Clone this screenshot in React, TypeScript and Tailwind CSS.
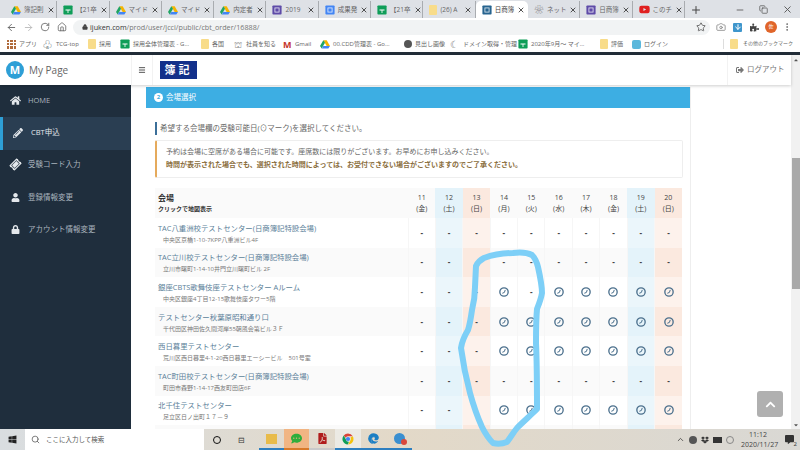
import React from 'react';
import { ArrowLeft, ArrowRight, ArrowDown, RotateCw, Home, Lock, Star, Camera, MoreVertical, Plus, Minus, X, Copy, Search, ChevronUp, Menu } from 'lucide-react';
import { FaHome, FaPencilAlt, FaTicketAlt, FaUser, FaLock, FaSignOutAlt, FaPuzzlePiece, FaChevronUp, FaCaretUp, FaCaretDown, FaWindows, FaFilePdf, FaEdge, FaCommentDots, FaYoutube, FaDropbox, FaCommentAlt } from 'react-icons/fa';

const FONT = "font-['Open_Sans','Noto_Sans_CJK_JP',sans-serif]";

function Drive({ s = 10 }: { s?: number }) {
  return (
    <svg width={s} height={s} viewBox="0 0 24 24" className="shrink-0">
      <path d="M8 3h8l8 14h-8z" fill="#f4b400" />
      <path d="M8 3 0 17l4 6 8-14z" fill="#1fa463" />
      <path d="M4 23h16l4-6H8z" fill="#4285f4" />
    </svg>
  );
}

function Sheet({ s = 10 }: { s?: number }) {
  return (
    <svg width={s} height={s} viewBox="0 0 24 24" className="shrink-0">
      <rect x="1" y="1" width="22" height="22" rx="2" fill="#0f9d58" />
      <path d="M6 11h12v2H13v6h-2v-6H6z" fill="#fff" />
    </svg>
  );
}

function Doc({ color, s = 10 }: { color: string; s?: number }) {
  return (
    <svg width={s} height={s} viewBox="0 0 24 24" className="shrink-0">
      <rect x="1" y="1" width="22" height="22" rx="2" fill={color} />
      <rect x="6" y="6" width="12" height="12" fill="#fff" opacity="0.85" />
      <rect x="8" y="8" width="8" height="8" fill={color} />
    </svg>
  );
}

function Folder() {
  return <div className="h-[10px] w-[8px] shrink-0 rounded-[1px] bg-[#f8dc8a]" />;
}

function ClockMark() {
  return (
    <svg width="10" height="10" viewBox="0 0 24 24" fill="none" stroke="#4a6f8c" className="mx-auto">
      <circle cx="12" cy="12" r="10" strokeWidth="3.2" />
      <path d="M8 15l5-2 2-6" strokeWidth="2.4" />
    </svg>
  );
}

function ChromeLogo() {
  return (
    <svg width="12" height="12" viewBox="0 0 24 24">
      <path d="M12 1a11 11 0 0 1 9.5 5.5H12a5.5 5.5 0 0 0-5 3.2L3.5 5A11 11 0 0 1 12 1z" fill="#db4437" />
      <path d="M21.5 6.500A11 11 0 0 1 12 23l4.700-8.200A5.500 5.500 0 0 0 16.800 9z" fill="#f4c20d" />
      <path d="M3.500 5 7.800 13A5.500 5.500 0 0 0 14 17.300L11.500 23A11 11 0 0 1 3.500 5z" fill="#0f9d58" />
      <circle cx="12" cy="12" r="4.200" fill="#4285f4" />
    </svg>
  );
}

const tabs = [
  { icon: <Drive />, text: '簿記則' },
  { icon: <Sheet />, text: '【21卒' },
  { icon: <Drive />, text: 'マイド' },
  { icon: <Drive />, text: 'マイド' },
  { icon: <Drive />, text: '内定者' },
  { icon: <Doc color="#5e4ba8" />, text: '2019' },
  { icon: <Doc color="#4285f4" />, text: '成果発' },
  { icon: <Sheet />, text: '【21卒' },
  { icon: <Folder />, text: '(26) A' },
  { icon: <Doc color="#27648f" />, text: '日商簿', active: true },
  { icon: <span className="w-[10px] shrink-0 text-center text-[9px] leading-none text-[#777]">❀</span>, text: 'ネット' },
  { icon: <Doc color="#5e4ba8" />, text: '日商簿' },
  { icon: <FaYoutube size={11} color="#e02020" className="shrink-0" />, text: 'このチ' },
];

const bookmarks = [
  { w: 'w-[36px]', icon: <span className="grid h-[9px] w-[9px] shrink-0 grid-cols-3 gap-px">{Array.from({ length: 9 }).map((_, i) => <span key={i} className="bg-[#b06a3a]" />)}</span>, text: 'アプリ' },
  { w: 'w-[45px]', icon: <span className="w-[10px] shrink-0 text-[9px] leading-none text-[#5a6a70]">♧</span>, text: 'TCG-top' },
  { w: 'w-[32px]', icon: <Folder />, text: '採用' },
  { w: 'w-[81px]', icon: <Sheet />, text: '採用全体管理表 - G...' },
  { w: 'w-[33px]', icon: <Folder />, text: '各国' },
  { w: 'w-[49px]', icon: <span className="w-[9px] shrink-0 text-[9px] leading-none text-[#888]">⛫</span>, text: '社員を知る' },
  { w: 'w-[37px]', icon: <span className="w-[9px] shrink-0 text-[9px] font-bold leading-none text-[#c5352b]">M</span>, text: 'Gmail' },
  { w: 'w-[84px]', icon: <Drive />, text: '00.CDD管理表 - Go...' },
  { w: 'w-[46px]', icon: <span className="h-[8px] w-[8px] shrink-0 rounded-full bg-[#555]" />, text: '見出し画像' },
  { w: 'w-[68px]', icon: <span className="w-[10px] shrink-0 text-[10px] leading-none text-[#666]">☾</span>, text: 'ドメイン取得・管理' },
  { w: 'w-[82px]', icon: <Sheet />, text: '2020年9月～ マイ...' },
  { w: 'w-[32px]', icon: <Folder />, text: '評価' },
  { w: 'w-[36px]', icon: <span className="h-[9px] w-[9px] shrink-0 rounded-[2px] bg-[#5cb8dc]" />, text: 'ログイン' },
];

const nav = [
  { icon: <FaHome size={11} />, text: 'HOME' },
  { icon: <FaPencilAlt size={10} />, text: 'CBT申込', active: true },
  { icon: <FaTicketAlt size={11} className="-rotate-45" />, text: '受験コード入力' },
  { icon: <FaUser size={9} />, text: '登録情報変更' },
  { icon: <FaLock size={9} />, text: 'アカウント情報変更' },
];

const days = [
  { d: '11', w: '金' }, { d: '12', w: '土' }, { d: '13', w: '日' }, { d: '14', w: '月' }, { d: '15', w: '火' },
  { d: '16', w: '水' }, { d: '17', w: '木' }, { d: '18', w: '金' }, { d: '19', w: '土' }, { d: '20', w: '日' },
];

const venues = [
  { name: 'TAC八重洲校テストセンター(日商簿記特設会場)', addr: '中央区京橋1-10-7KPP八重洲ビル4F', slots: '' },
  { name: 'TAC立川校テストセンター(日商簿記特設会場)', addr: '立川市曙町1-14-10井門立川曙町ビル 2F', slots: '' },
  { name: '銀座CBTS歌舞伎座テストセンター Aルーム', addr: '中央区銀座4丁目12-15歌舞伎座タワー5階', slots: '0001011111' },
  { name: 'テストセンター秋葉原昭和通り口', addr: '千代田区神田佐久間河岸55朝風会第ビル３Ｆ', slots: '0001111111' },
  { name: '西日暮里テストセンター', addr: '荒川区西日暮里4-1-20西日暮里エーシービル　501号室', slots: '0001111111' },
  { name: 'TAC町田校テストセンター(日商簿記特設会場)', addr: '町田市森野1-14-17西友町田店6F', slots: '' },
  { name: '北千住テストセンター', addr: '足立区日ノ出町１７－９', slots: '0001111111' },
];

function cellBg(i: number, row: number) {
  if (i === 1 || i === 8) return row % 2 ? 'bg-[#e4f3fa]' : 'bg-[#ebf6fb]';
  if (i === 2 || i === 9) return row % 2 ? 'bg-[#fbe9df]' : 'bg-[#fdf2ec]';
  return row % 2 ? 'bg-[#fafafa]' : 'bg-white';
}

export default function App() {
  return (
    <div className={`relative flex h-[450px] w-[800px] flex-col overflow-hidden bg-white ${FONT}`}>
      {/* tabs */}
      <div className="flex h-[18px] shrink-0 items-end bg-[#dee1e6] pl-[5px]">
        {tabs.map((t, i) => (
          <div
            key={i}
            className={`flex h-[17px] w-[52.3px] shrink-0 items-center gap-[3px] pl-[6px] pr-[3px] text-[6.5px] ${t.active ? 'rounded-t-[5px] bg-white text-[#444]' : 'border-r border-[#a9acb0] text-[#666]'}`}
          >
            {t.icon}
            <span className="flex-1 whitespace-nowrap">{t.text}</span>
            <X size={8} strokeWidth={2.5} className="shrink-0 text-[#333]" />
          </div>
        ))}
        <Plus size={12} strokeWidth={2} className="mb-[2px] ml-[5px] text-[#444]" />
        <div className="ml-auto flex h-[17px] items-center gap-[14px] pr-[7px] text-[#555]">
          <Minus size={10} />
          <Copy size={9} />
          <X size={11} />
        </div>
      </div>

      {/* address bar */}
      <div className="flex h-[18px] shrink-0 items-center bg-white pl-[6px] text-[#666]">
        <ArrowLeft size={11} />
        <ArrowRight size={11} className="ml-[6px] text-[#bbb]" />
        <RotateCw size={10} className="ml-[6px]" />
        <Home size={10} className="ml-[7px]" />
        <div className="ml-[6px] flex h-[15px] w-[637px] items-center rounded-full bg-[#f1f3f4] pl-[9px] text-[7.2px]">
          <Lock size={6} className="text-[#444]" fill="#444" />
          <span className="ml-[2px] text-[#333]">ijuken.com</span>
          <span className="text-[#777]">/prod/user/jcci/public/cbt_order/16888/</span>
          <Star size={10} className="ml-auto mr-[4px] text-[#555]" />
        </div>
        <Camera size={10} className="ml-[6px] text-[#888]" />
        <div className="ml-[7px] flex h-[9px] w-[9px] items-center justify-center rounded-[1px] bg-[#3f96cc] text-white">
          <ArrowDown size={8} strokeWidth={3} />
        </div>
        <FaPuzzlePiece size={9} className="ml-[8px] text-[#444]" />
        <div className="ml-[6px] flex h-[12px] w-[12px] items-center justify-center rounded-full bg-[#e0652a] text-[5px] text-white">佐</div>
        <MoreVertical size={10} className="ml-[5px]" />
      </div>

      {/* bookmarks */}
      <div className="flex h-[16px] shrink-0 items-center bg-white pl-[7px] text-[6px] text-[#666]">
        {bookmarks.map((b, i) => (
          <div key={i} className={`flex ${b.w} shrink-0 items-center gap-[3px] whitespace-nowrap`}>
            {b.icon}
            <span>{b.text}</span>
          </div>
        ))}
        <div className="ml-auto flex h-[10px] items-center gap-[5px] border-l border-[#ddd] pl-[6px] pr-[7px] text-[5px]">
          <Folder />
          <span>その他のブックマーク</span>
        </div>
      </div>

      <div className="h-[3px] shrink-0 bg-[#222d38]" />

      {/* page */}
      <div className="flex min-h-0 flex-1">
        <div className="flex min-w-0 flex-1 flex-col">
          <header className="relative z-10 flex h-[30px] shrink-0 items-center bg-white shadow-[0_1px_3px_rgba(0,0,0,0.2)]">
            <div className="flex h-full w-[131px] items-center gap-[5px] pl-[6px]">
              <div className="flex h-[18px] w-[18px] items-center justify-center rounded-full bg-[#2e9fd6] text-[11px] font-bold text-white">M</div>
              <span className="text-[10px] text-[#666]">My Page</span>
            </div>
            <div className="flex h-full w-[22px] items-center justify-center border-x border-[#f2f2f2]">
              <Menu size={8} strokeWidth={3} className="text-[#555]" />
            </div>
            <div className="ml-[7px] flex h-[18px] w-[37px] items-center justify-center bg-[#12308a] text-[11px] font-bold tracking-[3px] text-white">簿記</div>
            <div className="ml-auto flex h-full w-[64px] items-center gap-[3px] border-l border-[#f2f2f2] pl-[8px] text-[7.5px] text-[#777]">
              <FaSignOutAlt size={8} />
              <span>ログアウト</span>
            </div>
          </header>

          <div className="flex min-h-0 flex-1">
            <aside className="w-[131px] shrink-0 bg-[#1f2e3d] text-[7.5px] text-[#aab4bd]">
              {nav.map((n) => (
                <div
                  key={n.text}
                  className={`flex h-[32.4px] items-center gap-[7px] pb-[2px] pl-[9px] ${n.active ? 'border-l-[3px] border-[#2e9fd6] bg-[#2a3e52] pl-[6px] text-[#e4e8ec]' : ''}`}
                >
                  <span className="flex w-[12px] justify-center text-[#e4e8ec]">{n.icon}</span>
                  <span>{n.text}</span>
                </div>
              ))}
            </aside>

            <main className="min-w-0 flex-1 overflow-hidden pl-[15px] pt-[2px]">
              <div className="h-[600px] w-[545px] border-r border-[#eeeeee]">
                <div className="flex h-[21px] items-center gap-[3px] bg-[#3daee3] pl-[8px] text-[7.5px] text-white">
                  <span className="flex h-[9px] w-[9px] items-center justify-center rounded-full bg-white text-[6px] font-bold text-[#3daee3]">2</span>
                  会場選択
                </div>
                <div className="pl-[9px] pr-[7px] pt-[14px]">
                  <p className="flex h-[13px] items-center border-l-[2px] border-[#3b6f99] pl-[3px] text-[7.5px] text-[#666]">希望する会場欄の受験可能日(⊙マーク)を選択してください。</p>
                  <div className="mt-[5px] h-[38px] rounded-[2px] border border-l-[2px] border-[#eeeeee] border-l-[#e5aa5c] pl-[9px] pt-[4px] text-[7px] leading-[13px] text-[#666]">
                    <p>予約は会場に空席がある場合に可能です。座席数には限りがございます。お早めにお申し込みください。</p>
                    <p className="font-bold text-[#8a6d3b]">時間が表示された場合でも、選択された時間によっては、お受付できない場合がございますのでご了承ください。</p>
                  </div>
                  <table className="mt-[10px] w-[527px] table-fixed border-collapse text-[#444]">
                    <colgroup>
                      <col className="w-[253px]" />
                      {days.map((d) => <col key={d.d} className="w-[27.4px]" />)}
                    </colgroup>
                    <thead>
                      <tr className="h-[30px]">
                        <th className="bg-[#fafafa] pl-[3px] text-left align-middle font-bold text-[#333]">
                          <div className="text-[8px] leading-[12px]">会場</div>
                          <div className="text-[6px] leading-[10px]">クリックで地図表示</div>
                        </th>
                        {days.map((d, i) => (
                          <th key={d.d} className={`text-center text-[7px] font-normal leading-[11px] ${cellBg(i, 1)}`}>
                            {d.d}<br />({d.w})
                          </th>
                        ))}
                      </tr>
                    </thead>
                    <tbody>
                      {venues.concat(venues[0]).map((v, r) => (
                        <tr key={r} className="h-[29.6px]">
                          <td className={`pl-[3px] pt-[1px] ${r % 2 ? 'bg-[#fafafa]' : 'bg-white'}`}>
                            <div className="whitespace-nowrap text-[7.4px] leading-[13px] text-[#5b7f99]">{r < 7 ? v.name : ''}</div>
                            <div className="whitespace-nowrap pl-[5px] text-[6px] leading-[10px] text-[#777]">{r < 7 ? v.addr : ''}</div>
                          </td>
                          {days.map((d, i) => (
                            <td key={d.d} className={`border-l border-[#f6f6f6] text-center text-[8px] font-bold ${cellBg(i, r)}`}>
                              {v.slots[i] === '1' && r < 7 ? <ClockMark /> : r < 7 ? '-' : ''}
                            </td>
                          ))}
                        </tr>
                      ))}
                    </tbody>
                  </table>
                </div>
              </div>
            </main>
          </div>
        </div>

        {/* scrollbar */}
        <div className="flex w-[9px] shrink-0 flex-col bg-[#f1f1f1] pl-px">
          <div className="flex h-[9px] items-center justify-center text-[#555]"><FaCaretUp size={6} /></div>
          <div className="mt-[94px] h-[131px] bg-[#a9a9a9]" />
          <div className="mt-auto flex h-[9px] items-center justify-center text-[#555]"><FaCaretDown size={6} /></div>
        </div>
      </div>

      {/* taskbar */}
      <div className="relative z-10 flex h-[21px] shrink-0 items-center bg-gradient-to-r from-[#d9dde0] via-[#e3d9c8] to-[#d9d8d4]">
        <div className="flex w-[25px] justify-center"><FaWindows size={9} className="text-[#222]" /></div>
        <div className="flex h-full w-[179px] items-center gap-[6px] bg-white pl-[6px] text-[6.5px] text-[#555]">
          <Search size={9} />
          <span>ここに入力して検索</span>
        </div>
        <div className="ml-[9px] h-[8px] w-[8px] rounded-full border-[1.5px] border-[#111]" />
        <div className="ml-[17px] text-[8px] text-[#333]">⊟</div>
        <div className="ml-[14px] flex h-full w-[25px] items-center justify-center border-b-2 border-[#2d7fc0]"><div className="h-[10px] w-[11px] bg-[#e8bb4a]" /></div>
        <div className="flex h-full w-[25px] items-center justify-center border-b-2 border-[#d87a2a] bg-[#f1b583]"><FaCommentDots size={11} className="text-[#2fae3c]" /></div>
        <div className="flex h-full w-[26px] items-center justify-center border-b-2 border-[#c9c9c9]"><FaFilePdf size={11} className="text-[#b01c1c]" /></div>
        <div className="flex h-full w-[26px] items-center justify-center border-b-2 border-[#2d7fc0] bg-[#eceae4]"><ChromeLogo /></div>
        <div className="flex h-full w-[25px] items-center justify-center border-b-2 border-[#2d7fc0]"><FaEdge size={11} className="text-[#1c7fc4]" /></div>
        <div className="flex h-full w-[26px] items-center justify-center border-b-2 border-[#2d7fc0]">
          <div className="relative h-[11px] w-[11px] rounded-full bg-[#3a8fd0]">
            <span className="absolute -bottom-px -right-[2px] h-[6px] w-[6px] rounded-full bg-[#d9483b]" />
          </div>
        </div>
        <div className="ml-auto flex items-center gap-[4px] pr-[6px] text-[#333]">
          <ChevronUp size={9} />
          <span className="h-[8px] w-[8px] rounded-full bg-[#555]" />
          <FaDropbox size={8} />
          <span className="h-[6px] w-[9px] bg-[#333]" />
          <span className="h-[8px] w-[8px] rounded-full border border-[#888]" />
          <div className="ml-[3px] w-[34px] text-center text-[7px] leading-[10px] text-[#444]">11:12<br />2020/11/27</div>
          <div className="relative ml-[6px]">
            <FaCommentAlt size={9} />
            <span className="absolute -bottom-[3px] -right-[3px] text-[6px] leading-none">2</span>
          </div>
        </div>
      </div>

      {/* back to top */}
      <div className="absolute left-[757px] top-[391px] z-10 flex h-[26px] w-[26px] items-center justify-center rounded-[3px] bg-[#b0b0b0] text-white">
        <FaChevronUp size={11} />
      </div>

      {/* hand drawn marker */}
      <svg className="pointer-events-none absolute left-0 top-0 z-20" width="800" height="450" fill="none">
        <path
          d="M476 266C478 262 480 260 484 258C492 255 503 253 513 253C521 252 528 253 532 255C536 259 537 263 538 267C540 276 542 285 542 293C541 299 539 304 537 309C536 320 536 332 536 343C537 365 537 388 537 409C531 415 524 421 517 428C513 433 510 438 507 442C502 444 497 444 493 443C488 438 485 433 482 427C477 416 473 404 470 393C466 378 463 363 461 348C462 341 465 335 468 330C470 324 471 317 472 310C474 302 475 295 475 287Z"
          stroke="#7dcff7"
          strokeWidth="6"
          strokeLinecap="round"
          strokeLinejoin="round"
        />
      </svg>
    </div>
  );
}
